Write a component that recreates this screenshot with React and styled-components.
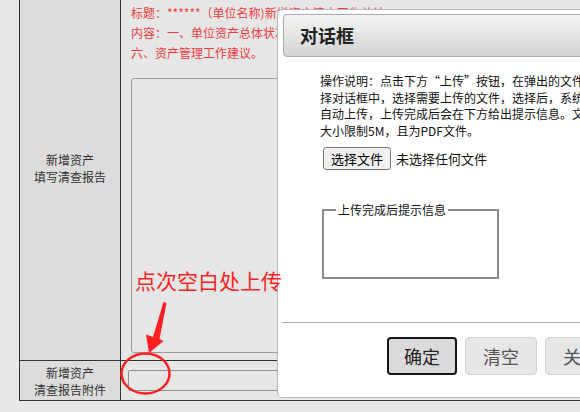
import React from 'react';
import styled, { createGlobalStyle } from 'styled-components';

const GlobalStyle = createGlobalStyle`
  html, body {
    margin: 0;
    padding: 0;
    overflow: hidden;
    background: #e6e6e6;
  }
  body {
    font-family: "Noto Sans CJK SC", "Microsoft YaHei", sans-serif;
  }
`;

const Page = styled.div`
  position: relative;
  width: 580px;
  height: 412px;
  overflow: hidden;
  padding-left: 19px;
  box-sizing: border-box;
  background: #e7e7e7;
`;

const Table = styled.div`
  width: 720px;
  display: grid;
  grid-template-columns: 101px 1fr;
  grid-template-rows: 361px 40px;
  border-left: 1px solid #333;
`;

const LabelCell = styled.div`
  box-sizing: border-box;
  background: #dcdcdc;
  border-right: 1px solid #333;
  border-bottom: 1px solid #333;
  display: flex;
  flex-direction: column;
  justify-content: center;
  align-items: center;
  padding-bottom: ${(p) => p.$shift || 0}px;
  font-size: 12px;
  line-height: 17px;
  color: #333;
  text-align: center;
`;

const ContentCell = styled.div`
  box-sizing: border-box;
  background: #e6e6e6;
  border-bottom: 1px solid #333;
  padding: ${(p) => p.$pad};
`;

const RedNote = styled.div`
  color: #f23a3a;
  font-size: 12px;
  line-height: 20px;
  white-space: nowrap;
`;

const TextBox = styled.div`
  margin-top: 15px;
  width: 460px;
  height: 275px;
  box-sizing: border-box;
  border: 1px solid #9a9a9a;
  border-radius: 3px;
  background: #e6e6e6;
`;

const InputBox = styled.div`
  width: 480px;
  height: 21px;
  box-sizing: border-box;
  border: 1px solid #8f8f8f;
  border-radius: 2px;
  background: #e6e6e6;
`;

const Dialog = styled.div`
  position: absolute;
  left: 277px;
  top: 9px;
  width: 420px;
  height: 389px;
  box-sizing: border-box;
  padding: 4px;
  border: 1px solid #b8b8b8;
  border-radius: 5px;
  background: #fff;
  display: flex;
  flex-direction: column;
  z-index: 2;
`;

const TitleBar = styled.div`
  margin-left: 1px;
  height: 43px;
  box-sizing: border-box;
  border: 1px solid #a8a8a8;
  border-radius: 4px;
  background: linear-gradient(#f4f4f4, #d3d3d3);
  padding: 0 16px;
  font-size: 18px;
  font-weight: bold;
  line-height: 41px;
  color: #222;
`;

const DialogBody = styled.div`
  padding: 16px 0 0 38px;
  color: #111;
`;

const Help = styled.div`
  font-size: 12px;
  line-height: 16.5px;
  white-space: nowrap;
`;

const FileRow = styled.div`
  margin-top: 8px;
  display: flex;
  align-items: center;
  gap: 5px;
  font-size: 13px;
`;

const FileButton = styled.div`
  margin-left: 3px;
  width: 68px;
  height: 23px;
  box-sizing: border-box;
  border: 1px solid #767676;
  border-radius: 3px;
  background: #efefef;
  display: flex;
  align-items: center;
  justify-content: center;
  color: #000;
`;

const Fieldset = styled.fieldset`
  margin: 31px 0 0 2px;
  width: 177px;
  height: 78px;
  box-sizing: border-box;
  border: 2px solid #8a8a8a;
  padding: 0 12px;
`;

const Legend = styled.legend`
  padding: 0 2px;
  font-size: 12px;
  line-height: 17px;
  color: #111;
`;

const ButtonPane = styled.div`
  margin-top: auto;
  border-top: 1px solid #aaa;
  padding: 14px 0 18px 105px;
  display: flex;
  gap: 8px;
`;

const Button = styled.div`
  width: ${(p) => (p.$primary ? 70 : 72)}px;
  height: 38px;
  box-sizing: border-box;
  border: ${(p) => (p.$primary ? '2px solid #161616' : '1px solid #d2d2d2')};
  border-radius: 4px;
  background: ${(p) => (p.$primary ? '#dadada' : '#e6e6e6')};
  color: ${(p) => (p.$primary ? '#222' : '#555')};
  font-size: 18px;
  display: flex;
  align-items: center;
  justify-content: center;
  flex-shrink: 0;
`;

const Callout = styled.div`
  position: absolute;
  left: 135px;
  top: 269px;
  font-size: 21px;
  line-height: 23px;
  color: #ff1f1f;
  white-space: nowrap;
  z-index: 3;
`;

const Marks = styled.svg`
  position: absolute;
  left: 0;
  top: 0;
  width: 580px;
  height: 412px;
  pointer-events: none;
  z-index: 3;
`;

export default function App() {
  return (
    <>
      <GlobalStyle />
      <Page>
        <Table>
          <LabelCell $shift={24}>
            <div>新增资产</div>
            <div>填写清查报告</div>
          </LabelCell>
          <ContentCell $pad="3px 0 0 10px">
            <RedNote>标题：******（单位名称)新增资产清查工作总结</RedNote>
            <RedNote>内容：一、单位资产总体状况；二、资产清查工作开展情况；三、</RedNote>
            <RedNote>六、资产管理工作建议。</RedNote>
            <TextBox />
          </ContentCell>
          <LabelCell>
            <div>新增资产</div>
            <div>清查报告附件</div>
          </LabelCell>
          <ContentCell $pad="9px 0 0 7px">
            <InputBox />
          </ContentCell>
        </Table>

        <Dialog>
          <TitleBar>对话框</TitleBar>
          <DialogBody>
            <Help>
              <div>操作说明：点击下方“上传”按钮，在弹出的文件选</div>
              <div>择对话框中，选择需要上传的文件，选择后，系统会</div>
              <div>自动上传，上传完成后会在下方给出提示信息。文件</div>
              <div>大小限制5M，且为PDF文件。</div>
            </Help>
            <FileRow>
              <FileButton>选择文件</FileButton>
              <span>未选择任何文件</span>
            </FileRow>
            <Fieldset>
              <Legend>上传完成后提示信息</Legend>
            </Fieldset>
          </DialogBody>
          <ButtonPane>
            <Button $primary>确定</Button>
            <Button>清空</Button>
            <Button>关闭</Button>
          </ButtonPane>
        </Dialog>

        <Callout>点次空白处上传</Callout>
        <Marks viewBox="0 0 580 412">
          <polygon
            points="163.5,302 153,337 146,334.5 149,353 163.5,341 159.5,339 166.5,303"
            fill="#ff1f1f"
          />
          <ellipse cx="145.5" cy="373.5" rx="24" ry="20" fill="none" stroke="#ff1f1f" strokeWidth="2.5" />
        </Marks>
      </Page>
    </>
  );
}
